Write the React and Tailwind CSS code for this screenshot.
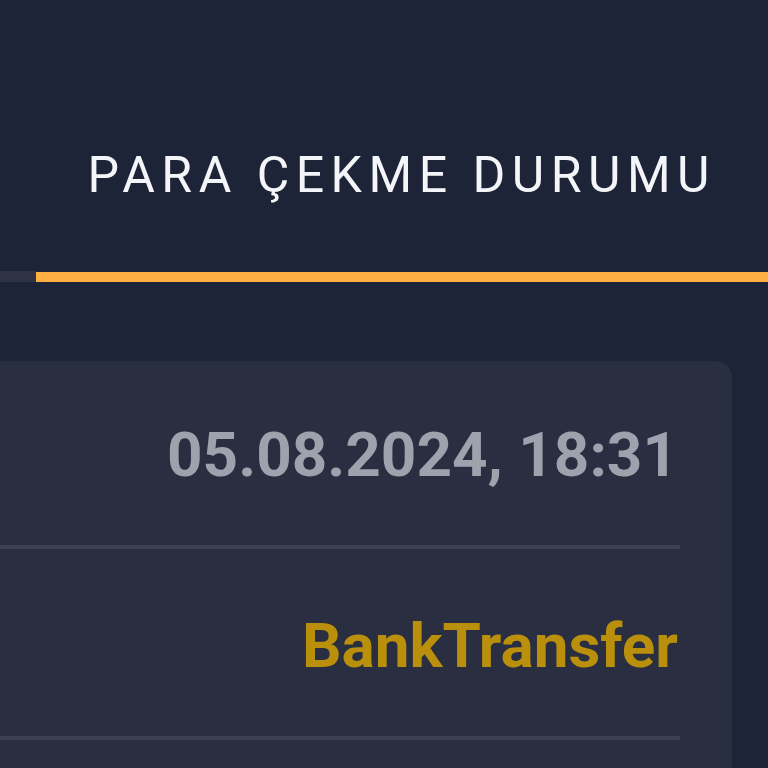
export default function App() {
  const rows = [
    { text: '05.08.2024, 18:31', color: 'text-[#9ea2ad]', pt: 'pt-[61px]' },
    { text: 'BankTransfer', color: 'text-[#b98f0b]', pt: 'pt-[64px]' },
  ];

  return (
    <div className="w-[768px] h-[768px] overflow-hidden bg-[#1e2437] font-['Roboto',sans-serif]">
      {/* Header */}
      <div className="pt-[150px] pr-[52px] flex justify-end">
        <h1 className="text-[50px] leading-[50px] font-normal tracking-[0.13em] text-[#f4f5f8] whitespace-nowrap">
          PARA ÇEKME DURUMU
        </h1>
      </div>

      {/* Tabs indicator */}
      <div className="mt-[71px] flex items-center">
        <div className="w-[36px] h-[11px] bg-[#2d3345]" />
        <div className="flex-1 h-[10px] bg-[#ffae42]" />
      </div>

      {/* Card */}
      <div className="mt-[79px] pr-[36px]">
        <div className="-ml-6 bg-[#292e41] rounded-2xl pr-[52px] pl-6 h-[500px]">
          {rows.map((r) => (
            <div key={r.text}>
              <div className={`${r.pt} pb-[57px] flex justify-end pr-0.5`}>
                <span className={`text-[62px] leading-[66px] font-bold ${r.color} whitespace-nowrap`}>
                  {r.text}
                </span>
              </div>
              <div className="h-[4px] bg-[#3b4054]" />
            </div>
          ))}
        </div>
      </div>
    </div>
  );
}
